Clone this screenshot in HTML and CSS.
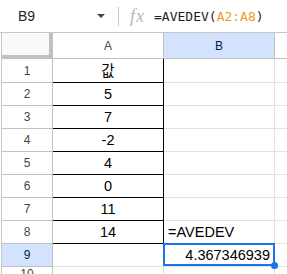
FILE: index.html
```html
<!DOCTYPE html>
<html lang="ko">
<head>
    <meta charset="UTF-8">
    <title>AVEDEV</title>
    <link rel="stylesheet" href="styles.css">
</head>
<body>
    <div id="bar">
        <div class="name-box">B9</div>
        <span class="caret"></span>
        <span class="sep"></span>
        <span class="fx">fx</span>
        <div class="formula">=AVEDEV(<span class="ref">A2:A8</span>)</div>
    </div>
    <div id="sheet">
        <div class="corner"></div>
        <div class="col-head">A</div>
        <div class="col-head active">B</div>
        <div class="col-head last"></div>

        <div class="row-head">1</div>
        <div class="cell val range">값</div>
        <div class="cell"></div>
        <div class="cell last"></div>

        <div class="row-head">2</div>
        <div class="cell val range">5</div>
        <div class="cell"></div>
        <div class="cell last"></div>

        <div class="row-head">3</div>
        <div class="cell val range">7</div>
        <div class="cell"></div>
        <div class="cell last"></div>

        <div class="row-head">4</div>
        <div class="cell val range">-2</div>
        <div class="cell"></div>
        <div class="cell last"></div>

        <div class="row-head">5</div>
        <div class="cell val range">4</div>
        <div class="cell"></div>
        <div class="cell last"></div>

        <div class="row-head">6</div>
        <div class="cell val range">0</div>
        <div class="cell"></div>
        <div class="cell last"></div>

        <div class="row-head">7</div>
        <div class="cell val range">11</div>
        <div class="cell"></div>
        <div class="cell last"></div>

        <div class="row-head">8</div>
        <div class="cell val range">14</div>
        <div class="cell text">=AVEDEV</div>
        <div class="cell last"></div>

        <div class="row-head active">9</div>
        <div class="cell"></div>
        <div class="cell num selected">4.367346939</div>
        <div class="cell last"></div>

        <div class="row-head">10</div>
        <div class="cell"></div>
        <div class="cell"></div>
        <div class="cell last"></div>
    </div>
</body>
</html>
```
FILE: styles.css
```css
*{
    margin: 0;
    padding: 0;
    box-sizing: border-box;
}
body{
    width: 287px;
    height: 274px;
    overflow: hidden;
    background: #fff;
    font-family: "Liberation Sans", "Noto Sans CJK KR", Arial, sans-serif;
    color: #000;
}
#bar{
    height: 33px;
    border-bottom: 1px solid #c7c7c7;
    display: flex;
    align-items: center;
}
.name-box{
    width: 94px;
    padding-left: 18px;
    font-size: 14px;
    color: #1f1f1f;
}
.caret{
    width: 0;
    height: 0;
    border-left: 4px solid transparent;
    border-right: 4px solid transparent;
    border-top: 4px solid #444746;
    margin-left: 3px;
}
.sep{
    width: 1px;
    height: 19px;
    background: #c7c7c7;
    margin-left: 13px;
}
.fx{
    font-family: "Liberation Serif", serif;
    font-style: italic;
    font-size: 18px;
    color: #b7b7b7;
    margin-left: 11px;
    letter-spacing: 1px;
}
.formula{
    font-family: "DejaVu Sans Mono", monospace;
    font-size: 13px;
    color: #1f1f1f;
    margin-left: 9px;
}
.ref{
    color: #f09a1f;
}
#sheet{
    display: grid;
    grid-template-columns: 51px 111px 111px 1fr;
    grid-template-rows: 26px 24px repeat(8, 23px) 1fr;
    height: 241px;
    margin-left: 1px;
    border-left: 1px solid #c7c7c7;
}
.corner{
    background: #f8f9fa;
    border-right: 4px solid #c0c0c0;
    border-bottom: 4px solid #c0c0c0;
}
.col-head{
    border-right: 1px solid #c0c0c0;
    border-bottom: 1px solid #c0c0c0;
    display: flex;
    align-items: center;
    justify-content: center;
    font-size: 12px;
    color: #444746;
}
.col-head.active,.row-head.active{
    background: #d3e3fd;
    color: #041e49;
}
.col-head.last{
    border-right: none;
}
.row-head{
    border-right: 1px solid #c0c0c0;
    border-bottom: 1px solid #c0c0c0;
    display: flex;
    align-items: center;
    justify-content: center;
    font-size: 12px;
    color: #444746;
}
.cell{
    border-right: 1px solid #e1e1e1;
    border-bottom: 1px solid #e1e1e1;
    display: flex;
    align-items: flex-end;
    padding: 0 4px 2px;
    font-size: 14.5px;
    line-height: 17px;
    white-space: nowrap;
    position: relative;
}
.cell.last{
    border-right: none;
}
.val{
    justify-content: center;
}
.range{
    border-right: 1px solid #000;
    border-bottom: 1px solid #000;
}
.text{
    justify-content: flex-start;
}
.num{
    justify-content: flex-end;
}
.selected::after{
    content: "";
    position: absolute;
    left: -1px;
    top: -1px;
    right: -1px;
    bottom: 0;
    border: 2px solid #1a73e8;
}
.selected::before{
    content: "";
    position: absolute;
    right: -4px;
    bottom: -3px;
    width: 7px;
    height: 7px;
    border-radius: 50%;
    background: #1a73e8;
    z-index: 1;
}
```
